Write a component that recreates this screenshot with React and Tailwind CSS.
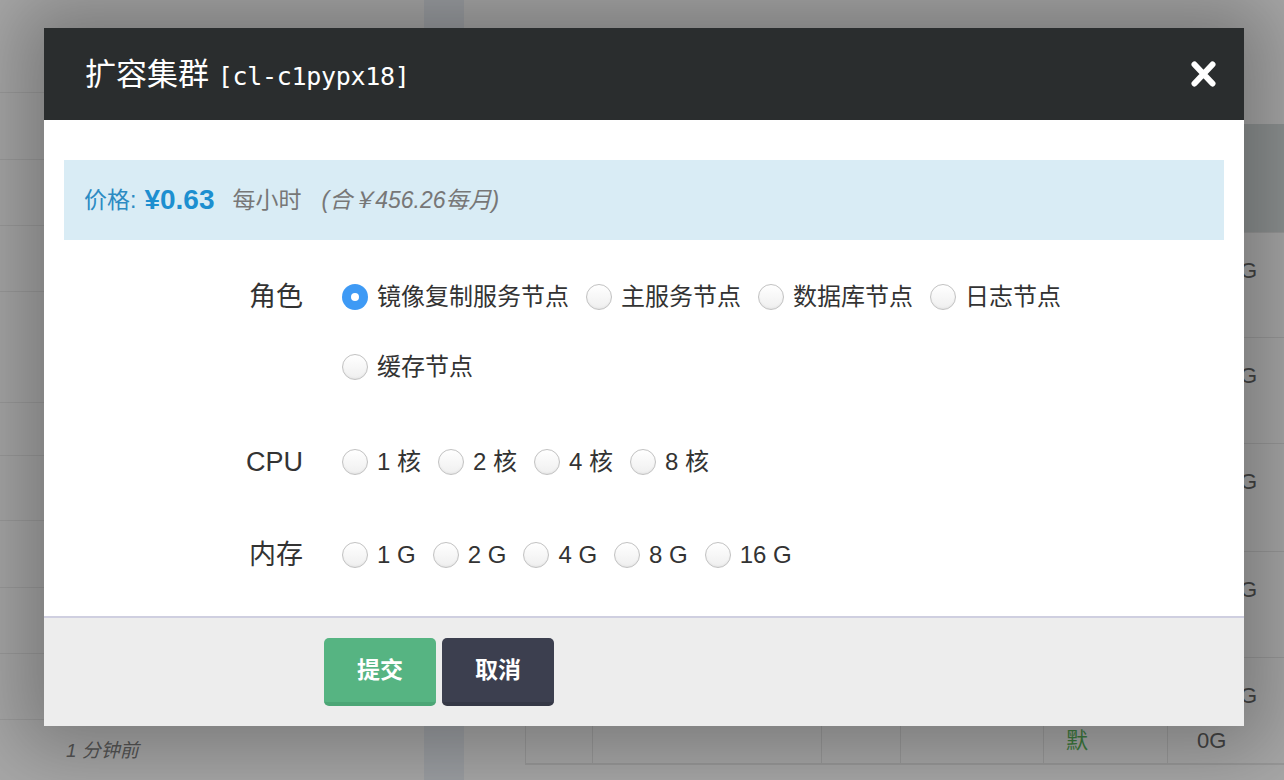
import React from "react";

const roles = ["镜像复制服务节点", "主服务节点", "数据库节点", "日志节点", "缓存节点"];
const cpus = ["1 核", "2 核", "4 核", "8 核"];
const mems = ["1 G", "2 G", "4 G", "8 G", "16 G"];

// lines of the dimmed list on the left, by row height
const leftRows = [67, 66, 66, 111, 53, 65, 67, 66, 66];
const tableRows = [105, 106, 108, 106];

function Radio({ checked, label }) {
  return (
    <label className="mr-[17px] flex h-[70px] items-center">
      {checked ? (
        <span className="flex h-[26px] w-[26px] items-center justify-center rounded-full bg-[#3e9af5]">
          <span className="h-[8px] w-[8px] rounded-full bg-white" />
        </span>
      ) : (
        <span className="h-[26px] w-[26px] rounded-full border border-[#c2c2c2] bg-gradient-to-b from-white to-[#efefef] shadow-[inset_0_-1px_2px_rgba(0,0,0,0.05)]" />
      )}
      <span className="ml-[9px] text-[24px] text-[#333]">{label}</span>
    </label>
  );
}

function Field({ label, children, className = "" }) {
  return (
    <div className={`flex ${className}`}>
      <div className="flex h-[70px] w-[239px] items-center justify-end text-[27px] text-[#333]">
        {label}
      </div>
      <div className="ml-[39px] flex w-[760px] flex-wrap">{children}</div>
    </div>
  );
}

export default function App() {
  return (
    <div className="relative h-[780px] w-[1284px] overflow-hidden bg-[#a8a8a8] font-['Liberation_Sans','Noto_Sans_CJK_SC',sans-serif]">
      {/* page behind the dialog */}
      <div className="flex h-full">
        <div className="flex w-[424px] shrink-0 flex-col pt-[92px]">
          {leftRows.map((h, i) => (
            <div key={i} style={{ height: h }} className="border-t border-[#9c9c9c]" />
          ))}
          <div className="border-t border-[#9c9c9c] pl-[66px] pt-[17px] text-[19px] italic text-[#555]">
            1 分钟前
          </div>
        </div>
        <div className="w-[40px] shrink-0 bg-[#9c9fa3]" />
        <div className="shrink-0 pl-[61px] pt-[124px]">
          <div className="w-[800px] border-b-2 border-l border-[#999]">
            <div className="h-[108px] bg-[#8e9292]" />
            {tableRows.map((h, i) => (
              <div key={i} style={{ height: h }} className="flex border-t border-[#999]">
                <div className="ml-[642px] pl-[23px] pt-[21px] text-[22px] text-[#444]">1000G</div>
              </div>
            ))}
            <div className="flex h-[106px] border-t border-[#999]">
              <div className="w-[67px] border-r border-[#999]" />
              <div className="w-[229px] border-r border-[#999]" />
              <div className="w-[79px] border-r border-[#999]" />
              <div className="w-[143px] border-r border-[#999]" />
              <div className="w-[124px] border-r border-[#999] pl-[22px] pt-[66px] text-[22px] text-[#3d7a3d]">默</div>
              <div className="flex flex-col pl-[29px] pt-[21px] text-[22px] text-[#444]">
                <span className="-ml-[6px]">1000G</span>
                <span className="mt-[12px]">0G</span>
              </div>
            </div>
          </div>
        </div>
      </div>

      {/* dialog */}
      <div className="absolute left-[44px] top-[28px] w-[1200px] shadow-[0_0_70px_25px_rgba(0,0,0,0.28)]">
        <div className="flex h-[92px] items-center justify-between bg-[#2a2d2e] pl-[41px] pr-[28px] text-white">
          <h1 className="text-[31px] leading-none">
            扩容集群{" "}
            <span className="font-['DejaVu_Sans_Mono',monospace] text-[25px] font-medium tracking-[-0.3px]">
              [cl-c1pypx18]
            </span>
          </h1>
          <svg width="25" height="26" viewBox="0 0 25 26">
            <path d="M3.5 3.5 L21.5 22.5 M21.5 3.5 L3.5 22.5" stroke="white" strokeWidth="6" strokeLinecap="round" />
          </svg>
        </div>

        <div className="bg-white px-[20px] pb-[26px] pt-[40px]">
          <div className="flex h-[80px] items-center bg-[#d9ecf5] pl-[20px]">
            <span className="text-[23px] text-[#2c8bc3]">价格:</span>
            <span className="ml-[8px] text-[28px] font-bold text-[#1d8fd0]">¥0.63</span>
            <span className="ml-[18px] text-[23px] text-[#777]">每小时</span>
            <span className="ml-[20px] text-[23px] italic text-[#777]">(合￥456.26每月)</span>
          </div>

          <Field label="角色" className="mt-[22px]">
            {roles.map((r, i) => (
              <Radio key={r} label={r} checked={i === 0} />
            ))}
          </Field>
          <Field label="CPU" className="mt-[25px]">
            {cpus.map((c) => (
              <Radio key={c} label={c} />
            ))}
          </Field>
          <Field label="内存" className="mt-[23px]">
            {mems.map((m) => (
              <Radio key={m} label={m} />
            ))}
          </Field>
        </div>

        <div className="flex gap-[6px] border-t-2 border-[#cfcfe0] bg-[#ededed] pb-[20px] pl-[280px] pt-[20px]">
          <button className="h-[68px] w-[112px] rounded-[5px] border-b-4 border-[#4ca676] bg-[#56b482] text-[23px] font-bold text-white">
            提交
          </button>
          <button className="h-[68px] w-[112px] rounded-[5px] border-b-4 border-[#353846] bg-[#3c3f4f] text-[23px] font-bold text-white">
            取消
          </button>
        </div>
      </div>
    </div>
  );
}
